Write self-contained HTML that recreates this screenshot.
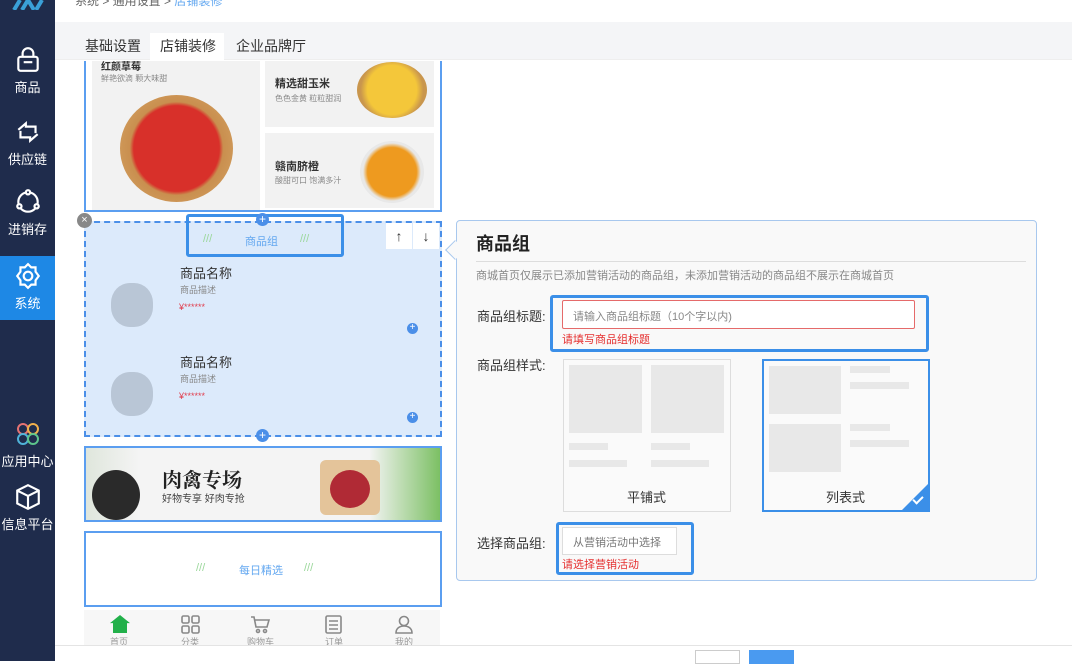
<!DOCTYPE html>
<html><head><meta charset="utf-8"><style>
*{margin:0;padding:0;box-sizing:border-box}
body{width:1072px;height:661px;overflow:hidden;position:relative;background:#fff;font-family:"Liberation Sans","Noto Sans CJK SC",sans-serif;color:#333}
.a{position:absolute}
.side{left:0;top:0;width:55px;height:661px;background:#1f2c4c}
.si{position:absolute;left:0;width:55px;text-align:center;color:#fff;font-size:13px}
.gb{background:#e8e8e8}
</style></head><body>
<div class="a side">
 <svg class="a" style="left:12px;top:0" width="34" height="10" viewBox="0 0 34 10"><path d="M2 10L8 0M10 10L16 0L22 10M24 10L30 0" stroke="#3aa0d8" stroke-width="4" fill="none"/></svg>
 <div class="si" style="top:46px"><svg width="28" height="28" viewBox="0 0 26 26" fill="none" stroke="#fff" stroke-width="2"><rect x="4" y="10" width="18" height="13" rx="2"/><path d="M8 10V7a5 5 0 0 1 10 0v3M9 15h8"/></svg><div>商品</div></div>
 <div class="si" style="top:118px"><svg width="28" height="28" viewBox="0 0 26 26" fill="none" stroke="#fff" stroke-width="2"><path d="M4 11l7-6v3h9v6M22 15l-7 6v-3H6v-6"/></svg><div>供应链</div></div>
 <div class="si" style="top:188px"><svg width="28" height="28" viewBox="0 0 26 26" fill="none" stroke="#fff" stroke-width="2"><circle cx="13" cy="13" r="9"/><circle cx="13" cy="4" r="2" fill="#1f2c4c"/><circle cx="5" cy="17" r="2" fill="#1f2c4c"/><circle cx="21" cy="17" r="2" fill="#1f2c4c"/></svg><div>进销存</div></div>
 <div class="a" style="left:0;top:256px;width:55px;height:64px;background:#1e88e5"></div>
 <div class="a" style="left:50px;top:283px;border:5px solid transparent;border-right-color:#fff"></div>
 <div class="si" style="top:262px"><svg width="28" height="28" viewBox="0 0 26 26" fill="none" stroke="#fff" stroke-width="2"><circle cx="13" cy="13" r="4"/><path d="M13 2l3 3h4v4l3 4-3 4v4h-4l-3 3-3-3H6v-4l-3-4 3-4V5h4z"/></svg><div>系统</div></div>
 <div class="si" style="top:420px"><svg width="28" height="28" viewBox="0 0 28 28" fill="none" stroke-width="2"><circle cx="9" cy="9" r="5" stroke="#e57373"/><circle cx="19" cy="9" r="5" stroke="#f0b04c"/><circle cx="9" cy="19" r="5" stroke="#4fb3d9"/><circle cx="19" cy="19" r="5" stroke="#5cc48b"/></svg><div style="margin-left:-6px;width:67px">应用中心</div></div>
 <div class="si" style="top:483px"><svg width="28" height="28" viewBox="0 0 26 26" fill="none" stroke="#fff" stroke-width="2"><path d="M13 2l10 5v12l-10 5-10-5V7zM3 7l10 5 10-5M13 12v12"/></svg><div style="margin-left:-6px;width:67px">信息平台</div></div>
</div>
<div class="a" style="left:55px;top:0;width:1017px;height:22px;background:#fff;font-size:12px;color:#666"><span class="a" style="left:20px;top:-8px">系统 &gt; 通用设置 &gt; <span style="color:#64a8f0">店铺装修</span></span></div>
<div class="a" style="left:55px;top:22px;width:1017px;height:38px;background:#f4f5f7;border-bottom:1px solid #eee"></div>
<div class="a" style="left:150px;top:33px;width:74px;height:28px;background:#fff"></div>
<div class="a" style="left:85px;top:36px;font-size:14px;color:#333">基础设置</div>
<div class="a" style="left:160px;top:36px;font-size:14px;color:#333">店铺装修</div>
<div class="a" style="left:236px;top:36px;font-size:14px;color:#333">企业品牌厅</div>

<div class="a" style="left:84px;top:61px;width:358px;height:151px;border:2px solid #5b9ef0;border-top:none;background:#fff"></div>
<div class="a" style="left:92px;top:61px;width:168px;height:149px;background:#f2f2f2"></div>
<div class="a" style="left:101px;top:58px;font-size:10px;color:#333;font-weight:bold">红颜草莓</div>
<div class="a" style="left:101px;top:73px;font-size:8px;color:#888">鲜艳欲滴 颗大味甜</div>
<div class="a" style="left:120px;top:95px;width:113px;height:107px;border-radius:50%;background:radial-gradient(circle,#d8302a 55%,#c98f4f 60%,#d9a868 100%)"></div>
<div class="a" style="left:265px;top:61px;width:169px;height:66px;background:#f2f2f2"></div>
<div class="a" style="left:275px;top:75px;font-size:11px;color:#333;font-weight:bold">精选甜玉米</div>
<div class="a" style="left:275px;top:93px;font-size:8px;color:#888">色色金黄 粒粒甜润</div>
<div class="a" style="left:357px;top:62px;width:70px;height:56px;border-radius:50%;background:radial-gradient(circle,#f4c73a 55%,#c9964d 70%)"></div>
<div class="a" style="left:265px;top:133px;width:169px;height:75px;background:#f2f2f2"></div>
<div class="a" style="left:275px;top:158px;font-size:11px;color:#333;font-weight:bold">赣南脐橙</div>
<div class="a" style="left:275px;top:175px;font-size:8px;color:#888">酸甜可口 饱满多汁</div>
<div class="a" style="left:360px;top:141px;width:64px;height:62px;border-radius:50%;background:radial-gradient(circle,#ee9a1f 55%,#e8e8e8 65%)"></div>

<div class="a" style="left:84px;top:221px;width:358px;height:216px;border:2px dashed #4b8fe8;background:#dceafb"></div>
<div class="a" style="left:77px;top:213px;width:15px;height:15px;border-radius:50%;background:#888;color:#fff;font-size:11px;text-align:center;line-height:15px">×</div>
<div class="a" style="left:186px;top:214px;width:158px;height:43px;border:3px solid #3b8fe8;border-radius:3px"></div>
<div class="a" style="left:203px;top:233px;font-size:11px;color:#9ad79a">///</div>
<div class="a" style="left:245px;top:233px;font-size:11px;color:#64a8f0">商品组</div>
<div class="a" style="left:300px;top:233px;font-size:11px;color:#9ad79a">///</div>
<div class="a" style="left:386px;top:223px;width:26px;height:26px;background:#fff;text-align:center;line-height:26px;font-size:14px">↑</div>
<div class="a" style="left:413px;top:223px;width:26px;height:26px;background:#fff;text-align:center;line-height:26px;font-size:14px">↓</div>
<div class="a" style="left:256px;top:213px;width:13px;height:13px;border-radius:50%;background:#4b8fe8;color:#fff;font-size:12px;line-height:12px;text-align:center">+</div>
<div class="a" style="left:256px;top:429px;width:13px;height:13px;border-radius:50%;background:#4b8fe8;color:#fff;font-size:12px;line-height:12px;text-align:center">+</div>
<div class="a" style="left:407px;top:323px;width:11px;height:11px;border-radius:50%;background:#4b8fe8;color:#fff;font-size:10px;line-height:10px;text-align:center">+</div>
<div class="a" style="left:407px;top:412px;width:11px;height:11px;border-radius:50%;background:#4b8fe8;color:#fff;font-size:10px;line-height:10px;text-align:center">+</div>
<div class="a" style="left:111px;top:283px;width:42px;height:44px;border-radius:45%;background:#b9c6d6"></div>
<div class="a" style="left:180px;top:263px;font-size:13px;color:#333">商品名称</div>
<div class="a" style="left:180px;top:283px;font-size:9px;color:#888">商品描述</div>
<div class="a" style="left:179px;top:302px;font-size:9px;color:#e04050">¥******</div>
<div class="a" style="left:111px;top:372px;width:42px;height:44px;border-radius:45%;background:#b9c6d6"></div>
<div class="a" style="left:180px;top:352px;font-size:13px;color:#333">商品名称</div>
<div class="a" style="left:180px;top:372px;font-size:9px;color:#888">商品描述</div>
<div class="a" style="left:179px;top:391px;font-size:9px;color:#e04050">¥******</div>

<div class="a" style="left:84px;top:446px;width:358px;height:76px;border:2px solid #5b9ef0;background:linear-gradient(90deg,#dfe6dc,#f4f4f4 15%,#f4f4f4 80%,#7cc064)"></div>
<div class="a" style="left:92px;top:470px;width:48px;height:50px;border-radius:50%;background:#2a2a2a"></div>
<div class="a" style="left:320px;top:460px;width:60px;height:55px;background:#e4c49a;border-radius:6px"></div>
<div class="a" style="left:330px;top:470px;width:40px;height:38px;border-radius:50%;background:#b02a35"></div>
<div class="a" style="left:162px;top:464px;font-size:20px;font-family:'Liberation Serif','Noto Serif CJK SC',serif;font-weight:bold;color:#222">肉禽专场</div>
<div class="a" style="left:162px;top:490px;font-size:10px;color:#444">好物专享 好肉专抢</div>

<div class="a" style="left:84px;top:531px;width:358px;height:76px;border:2px solid #5b9ef0;background:#fff"></div>
<div class="a" style="left:196px;top:562px;font-size:11px;color:#9ad79a">///</div>
<div class="a" style="left:239px;top:562px;font-size:11px;color:#64a8f0">每日精选</div>
<div class="a" style="left:304px;top:562px;font-size:11px;color:#9ad79a">///</div>

<div class="a" style="left:84px;top:610px;width:356px;height:35px;background:#f7f7f7"></div>
<div class="a" style="left:110px;top:615px;width:20px;height:18px;background:#22b04a;clip-path:polygon(50% 0,100% 45%,85% 45%,85% 100%,15% 100%,15% 45%,0 45%)"></div>
<div class="a" style="left:110px;top:635px;font-size:9px;color:#999">首页</div>
<svg class="a" style="left:181px;top:615px" width="19" height="19" viewBox="0 0 19 19" fill="none" stroke="#888" stroke-width="1.6"><rect x="1" y="1" width="7" height="7" rx="1.5"/><rect x="11" y="1" width="7" height="7" rx="1.5"/><rect x="1" y="11" width="7" height="7" rx="1.5"/><rect x="11" y="11" width="7" height="7" rx="1.5"/></svg>
<div class="a" style="left:181px;top:635px;font-size:9px;color:#999">分类</div>
<svg class="a" style="left:250px;top:615px" width="20" height="19" viewBox="0 0 20 19" fill="none" stroke="#888" stroke-width="1.6"><path d="M1 2h3l2 10h11l2-7H5"/><circle cx="8" cy="16" r="1.5"/><circle cx="15" cy="16" r="1.5"/></svg>
<div class="a" style="left:247px;top:635px;font-size:9px;color:#999">购物车</div>
<svg class="a" style="left:325px;top:615px" width="17" height="19" viewBox="0 0 17 19" fill="none" stroke="#888" stroke-width="1.6"><rect x="1" y="1" width="15" height="17" rx="1.5"/><path d="M4 6h9M4 10h9M4 14h9"/></svg>
<div class="a" style="left:325px;top:635px;font-size:9px;color:#999">订单</div>
<svg class="a" style="left:395px;top:615px" width="18" height="19" viewBox="0 0 18 19" fill="none" stroke="#888" stroke-width="1.6"><circle cx="9" cy="6" r="4.5"/><path d="M1 18c0-5 4-7 8-7s8 2 8 7z"/></svg>
<div class="a" style="left:395px;top:635px;font-size:9px;color:#999">我的</div>

<div class="a" style="left:55px;top:645px;width:1017px;height:16px;background:#fff;border-top:1px solid #e4e4e4"></div>
<div class="a" style="left:695px;top:650px;width:45px;height:14px;border:1px solid #ccc;background:#fff"></div>
<div class="a" style="left:749px;top:650px;width:45px;height:14px;background:#4a9af0"></div>

<div class="a" style="left:456px;top:220px;width:581px;height:361px;border:1px solid #a8c8ee;border-radius:4px;background:#f9f9f9"></div>
<div class="a" style="left:448px;top:243px;width:14px;height:14px;background:#f9f9f9;border-left:1px solid #a8c8ee;border-bottom:1px solid #a8c8ee;transform:rotate(45deg)"></div>
<div class="a" style="left:476px;top:230px;font-size:18px;font-weight:bold;color:#222">商品组</div>
<div class="a" style="left:476px;top:261px;width:550px;height:1px;background:#ddd"></div>
<div class="a" style="left:476px;top:267px;font-size:11px;color:#888">商城首页仅展示已添加营销活动的商品组，未添加营销活动的商品组不展示在商城首页</div>
<div class="a" style="left:477px;top:306px;font-size:13px;color:#333">商品组标题:</div>
<div class="a" style="left:550px;top:295px;width:379px;height:57px;border:3px solid #3b8fe8;border-radius:3px"></div>
<div class="a" style="left:562px;top:300px;width:353px;height:29px;border:1px solid #e56a6a;border-radius:2px;background:#fff;font-size:11px;color:#888;padding:7px 10px">请输入商品组标题（10个字以内)</div>
<div class="a" style="left:562px;top:331px;font-size:11px;color:#e53030">请填写商品组标题</div>
<div class="a" style="left:477px;top:355px;font-size:13px;color:#333">商品组样式:</div>
<div class="a" style="left:563px;top:359px;width:168px;height:153px;border:1px solid #ddd;background:#fafafa"></div>
<div class="a gb" style="left:569px;top:365px;width:73px;height:68px"></div>
<div class="a gb" style="left:651px;top:365px;width:73px;height:68px"></div>
<div class="a gb" style="left:569px;top:443px;width:39px;height:7px"></div>
<div class="a gb" style="left:651px;top:443px;width:39px;height:7px"></div>
<div class="a gb" style="left:569px;top:460px;width:58px;height:7px"></div>
<div class="a gb" style="left:651px;top:460px;width:58px;height:7px"></div>
<div class="a" style="left:627px;top:487px;font-size:13px;color:#333">平铺式</div>
<div class="a" style="left:762px;top:359px;width:168px;height:153px;border:2px solid #3b8fe8;background:#fafafa"></div>
<div class="a gb" style="left:769px;top:366px;width:72px;height:48px"></div>
<div class="a gb" style="left:769px;top:424px;width:72px;height:48px"></div>
<div class="a gb" style="left:850px;top:366px;width:40px;height:7px"></div>
<div class="a gb" style="left:850px;top:382px;width:59px;height:7px"></div>
<div class="a gb" style="left:850px;top:424px;width:40px;height:7px"></div>
<div class="a gb" style="left:850px;top:440px;width:59px;height:7px"></div>
<div class="a" style="left:826px;top:487px;font-size:13px;color:#333">列表式</div>
<div class="a" style="left:900px;top:482px;width:30px;height:30px;background:#3b8fe8;clip-path:polygon(100% 0,100% 100%,0 100%)"></div>
<div class="a" style="left:913px;top:496px;width:10px;height:6px;border-left:2px solid #fff;border-bottom:2px solid #fff;transform:rotate(-45deg)"></div>
<div class="a" style="left:477px;top:533px;font-size:13px;color:#333">选择商品组:</div>
<div class="a" style="left:556px;top:522px;width:138px;height:53px;border:3px solid #3b8fe8;border-radius:3px"></div>
<div class="a" style="left:562px;top:527px;width:115px;height:28px;border:1px solid #ddd;background:#fff;font-size:11px;color:#777;padding:6px 10px">从营销活动中选择</div>
<div class="a" style="left:562px;top:556px;font-size:11px;color:#e53030">请选择营销活动</div>
</body></html>
